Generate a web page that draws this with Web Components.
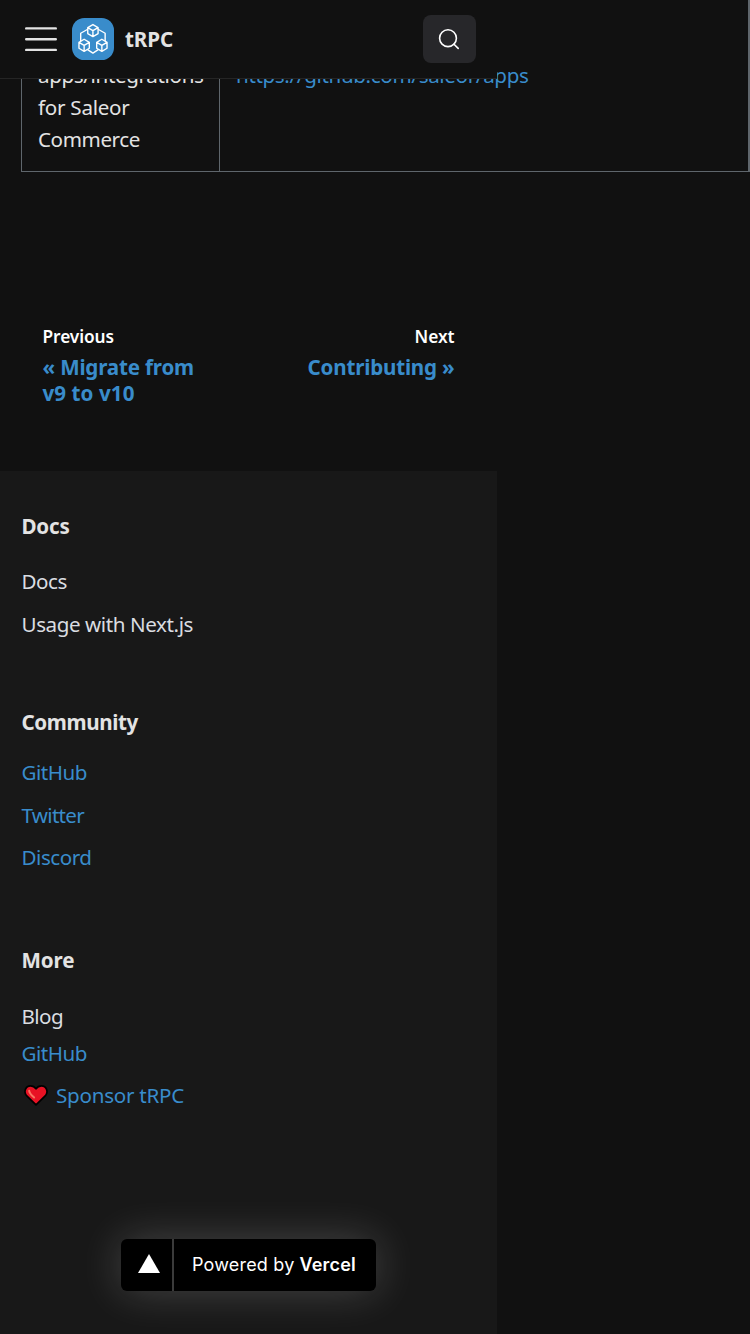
<!DOCTYPE html>
<html lang="en">
<head>
<meta charset="utf-8">
<title>tRPC</title>
<style>
html,body{margin:0;background:#111;color:#e3e3e3;font-family:"Noto Sans","Open Sans",sans-serif;font-size:20.6px;overflow:hidden}
</style>
</head>
<body>
<docs-page></docs-page>
<script>
const define = (name, html, extra) => customElements.define(name, class extends HTMLElement {
  constructor() {
    super();
    const t = document.createElement('template');
    t.innerHTML = html;
    this.attachShadow({mode: 'open'}).append(t.content.cloneNode(true));
  }
  connectedCallback() { if (extra) extra(this); }
});

// A single line of text whose tracking is set so that it spans its "w" attribute.
define('text-line', `<style>
:host{display:block;line-height:32px;height:32px;white-space:nowrap}
:host([blue]){color:#398ccb}
:host([bold]){font-weight:700}
:host([end]){text-align:right}
span{display:inline-block}
</style><span><slot></slot></span>`, el => {
  const span = el.shadowRoot.querySelector('span');
  const w = +el.getAttribute('w'), n = el.textContent.length;
  const d = (w - span.getBoundingClientRect().width) / n;
  span.style.letterSpacing = d.toFixed(3) + 'px';
});

define('nav-bar', `<style>
:host{position:fixed;top:0;left:0;z-index:2;width:497px;height:79px;box-sizing:border-box;background:#111;border-bottom:1px solid #252525;display:flex;align-items:center;padding:0 21px 0 25px}
.menu{width:32px;height:26px;margin-right:15px}
.logo{width:42px;height:42px;margin-right:11px}
text-line{font-size:20.6px}
.search{margin-left:auto;width:53px;height:48px;border-radius:8px;background:#27272a;display:flex;align-items:center;justify-content:center}
.search svg{margin-right:1px}
svg{display:block;flex:none}
</style>
<svg class="menu" viewBox="0 0 32 26" stroke="#e3e3e3" stroke-width="2.4" stroke-linecap="round"><path d="M1.2 2.4h29.6M1.2 13.2h29.6M1.2 23.9h29.6"/></svg>
<svg class="logo" viewBox="0 0 512 512"><rect width="512" height="512" rx="150" fill="#398CCB"/>
<g fill="none" stroke="#fff" stroke-width="17" stroke-linejoin="round">
<path d="M255 80l63 37v73l-63 37-63-37v-73zM192 117l63 37 63-37M255 154v73"/>
<path d="M148 259l63 37v73l-63 37-63-37v-73zM85 296l63 37 63-37M148 333v73"/>
<path d="M364 259l63 37v73l-63 37-63-37v-73zM301 296l63 37 63-37M364 333v73"/>
<path d="M192 137l-86 49v93M318 137l86 49v93M190 385l65 43 65-43"/></g></svg>
<text-line bold w="48">tRPC</text-line>
<div class="search"><svg width="22" height="22" viewBox="0 0 22 22" fill="none" stroke="#fff" stroke-width="1.6" stroke-linecap="round"><circle cx="10" cy="10.2" r="8.4"/><path d="M16 16.2l4.2 4.2"/></svg></div>`);

define('showcase-table', `<style>
:host{display:grid;grid-template-columns:197px 1fr;margin-left:21px;width:729px;height:172px;box-sizing:border-box;border:solid #5f666c;border-width:0 2px 1px 1px}
div{padding:59px 0 0 16px}
div+div{border-left:1px solid #5f666c}
</style>
<div><text-line w="165.5">apps/integrations</text-line><text-line w="91.5">for Saleor</text-line><text-line w="102">Commerce</text-line></div>
<div><text-line blue w="292.500">https://github.com/saleor/apps</text-line></div>`);

define('page-nav', `<style>
:host{display:flex;justify-content:space-between;width:412px;margin:149px 0 0 42.500px;height:149.5px}
.s{font-size:17.3px;color:#fff;font-weight:600;height:30px}
.t{height:26px}
</style>
<div><text-line class="s" w="71.5">Previous</text-line><text-line class="t" bold blue w="151.5">« Migrate from</text-line><text-line class="t" bold blue w="92">v9 to v10</text-line></div>
<div><text-line class="s" end w="40">Next</text-line><text-line class="t" end bold blue w="147">Contributing »</text-line></div>`);

define('footer-column', `<style>
:host{display:flex;flex-direction:column}
</style><slot></slot>`);

define('heart-icon', `<style>:host{display:block;width:24px;height:22px;margin-right:8px}svg{display:block}</style>
<svg width="24" height="22" viewBox="0 0 24 22"><path d="M12 20.8L2.3 11.300C-.4 8.100 1.3 1.9 6.5 1.9c2.3 0 4.2 1 5.5 3 1.300-2 3.200-3 5.500-3 5.200 0 6.900 6.200 4.200 9.400z" fill="#e81224" stroke="#000" stroke-width="1.7" stroke-linejoin="round"/><path d="M5.200 6.800c.2 2.500 2.200 4.200 4.900 6.700" stroke="#f87562" stroke-width="2" fill="none" stroke-linecap="round"/></svg>`);

define('vercel-badge', `<style>
:host{display:flex;width:255px;height:52px;border-radius:6px;background:#000;color:#fff;box-shadow:0 0 44px rgba(255,255,255,.2);font:18px/50px Inter,sans-serif}
.mark{width:34px;height:36.500px;border-right:2px solid #3b3b3b;padding:15.500px 0 0 17px}
.mark svg{margin-left:-.5px}
svg{display:block}
.txt{display:flex;margin-left:18px}
text-line{line-height:51px;height:52px}
.b{font-weight:600;margin-left:5px}
</style>
<div class="mark"><svg width="22" height="19" viewBox="0 0 22 19"><path d="M11 0l11 19H0z" fill="#fff"/></svg></div>
<div class="txt"><text-line w="102.500">Powered by</text-line><text-line class="b" w="56.500">Vercel</text-line></div>`);

define('site-footer', `<style>
:host{display:flex;flex-direction:column;width:475.500px;height:863.500px;background:#181818;padding-left:21.500px}
.sponsor{display:flex;align-items:center;padding-left:2.500px}
vercel-badge{margin:128px 0 0 99.500px}
</style>
<footer-column style="margin-top:39px">
<text-line bold w="48">Docs</text-line>
<text-line style="margin-top:23px;color:#dadde1" w="45.500">Docs</text-line>
<text-line style="margin-top:11px;color:#dadde1" w="171.500">Usage with Next.js</text-line></footer-column>
<footer-column style="margin-top:66px">
<text-line bold w="116.500">Community</text-line>
<text-line style="margin-top:18px" blue w="65.500">GitHub</text-line>
<text-line style="margin-top:11px" blue w="62.500">Twitter</text-line>
<text-line style="margin-top:10px" blue w="70">Discord</text-line></footer-column>
<footer-column style="margin-top:71px">
<text-line bold w="53">More</text-line>
<text-line style="margin-top:24px;color:#dadde1" w="41.500">Blog</text-line>
<text-line style="margin-top:5px" blue w="65.500">GitHub</text-line>
<div class="sponsor" style="margin-top:10px"><heart-icon></heart-icon><text-line blue w="128">Sponsor tRPC</text-line></div></footer-column>
<vercel-badge></vercel-badge>`);

define('docs-page', `<style>:host{display:block;width:750px;height:1334px;overflow:hidden}</style>
<nav-bar></nav-bar><showcase-table></showcase-table><page-nav></page-nav><site-footer></site-footer>`);
</script>
</body>
</html>
